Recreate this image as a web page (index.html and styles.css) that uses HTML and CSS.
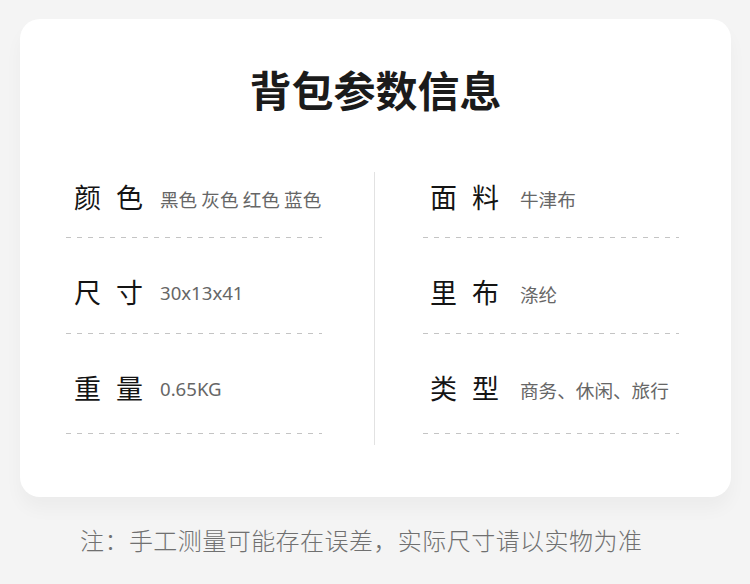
FILE: index.html
```html
<!DOCTYPE html>
<html lang="zh-CN">
<head>
<meta charset="utf-8">
<title>背包参数信息</title>
<link rel="stylesheet" href="styles.css">
</head>
<body>
<div class="page">
  <section class="card">
    <h1 class="title">背包参数信息</h1>
    <div class="specs">
      <div class="col col-left">
        <div class="row">
          <div class="line"><span class="label">颜色</span><span class="value">黑色 灰色 红色 蓝色</span></div>
          <div class="dash"></div>
        </div>
        <div class="row">
          <div class="line"><span class="label">尺寸</span><span class="value latin">30x13x41</span></div>
          <div class="dash"></div>
        </div>
        <div class="row">
          <div class="line"><span class="label">重量</span><span class="value latin">0.65KG</span></div>
          <div class="dash"></div>
        </div>
      </div>
      <div class="divider"></div>
      <div class="col col-right">
        <div class="row">
          <div class="line"><span class="label">面料</span><span class="value">牛津布</span></div>
          <div class="dash"></div>
        </div>
        <div class="row">
          <div class="line"><span class="label">里布</span><span class="value">涤纶</span></div>
          <div class="dash"></div>
        </div>
        <div class="row">
          <div class="line"><span class="label">类型</span><span class="value">商务、休闲、旅行</span></div>
          <div class="dash"></div>
        </div>
      </div>
    </div>
  </section>
  <p class="note">注：手工测量可能存在误差，实际尺寸请以实物为准</p>
</div>
</body>
</html>
```
FILE: styles.css
```css
html, body {
  margin: 0;
  padding: 0;
}
body {
  background: #f4f4f4;
  font-family: "Noto Sans CJK SC", "Noto Sans", sans-serif;
  width: 750px;
  height: 584px;
  overflow: hidden;
}
.page {
  padding: 19px 19px 0 20px;
}
.card {
  background: #ffffff;
  border-radius: 20px;
  height: 478px;
  box-sizing: border-box;
  padding-top: 49px;
  box-shadow: 0 12px 18px rgba(0, 0, 0, 0.035);
}
.title {
  margin: 0;
  text-align: center;
  font-size: 42px;
  line-height: 42px;
  font-weight: 700;
  color: #1b1b1b;
  letter-spacing: 0;
}
.specs {
  margin-top: 62px;
  display: grid;
  grid-template-columns: 308px 1px 304px;
  padding-left: 46px;
  height: 273px;
}
.col-left {
  margin-right: 52px;
}
.col-right {
  margin-left: 48px;
}
.divider {
  background: #e2e2e2;
}
.row {
  padding-top: 34px;
}
.row:first-child {
  padding-top: 5px;
}
.line {
  height: 40px;
  display: flex;
  align-items: center;
  padding-left: 8px;
}
.col-right .line {
  padding-left: 7px;
}
.label {
  display: inline-block;
  width: 86px;
  flex: none;
  font-size: 27px;
  letter-spacing: 15px;
  color: #141414;
  line-height: 40px;
}
.col-right .label {
  width: 90px;
}
.value {
  font-size: 18.6px;
  color: #666666;
  margin-top: 4px;
  line-height: 24px;
  white-space: nowrap;
}
.latin {
  font-family: "Noto Sans", "Noto Sans CJK SC", sans-serif;
  font-size: 18.6px;
  margin-top: 2px;
}
.dash {
  margin-top: 21px;
  height: 1px;
  background: repeating-linear-gradient(to right, #c4c4c4 0 5px, transparent 5px 11px);
}
.row:first-child .dash {
  margin-top: 20px;
}
.row:last-child .dash {
  margin-top: 25px;
}
.note {
  margin: 31px 0 0 0;
  padding-left: 60px;
  font-size: 24px;
  line-height: 24px;
  letter-spacing: 0.45px;
  color: #707070;
  font-weight: 300;
}
```
